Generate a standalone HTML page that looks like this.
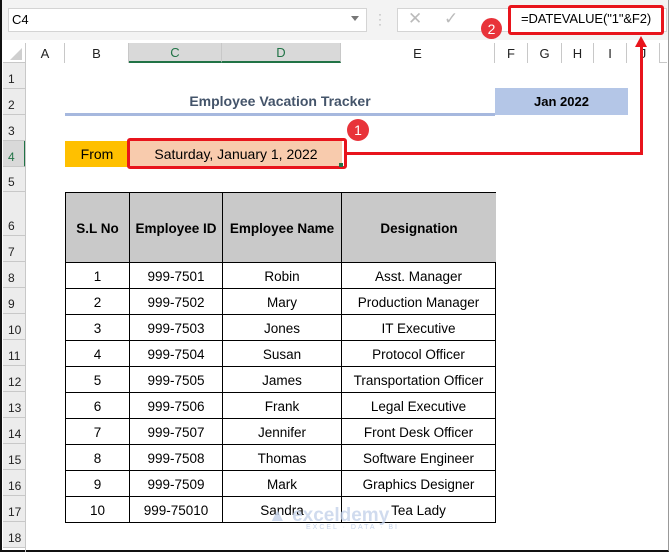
<!DOCTYPE html>
<html><head><meta charset="utf-8"><style>
*{margin:0;padding:0;box-sizing:border-box}
body{width:669px;height:552px;background:#fff;position:relative;overflow:hidden;font-family:"Liberation Sans",sans-serif;font-size:13px;color:#000}
.a{position:absolute}
.c{position:absolute;display:flex;align-items:center;justify-content:center;white-space:nowrap}
.rh{position:absolute;left:3px;width:23px;background:#ececec;border-bottom:1px solid #c8c8c8;font-size:12px;padding-left:5px;display:flex;align-items:flex-end;padding-bottom:2px;color:#222}
.ch{position:absolute;top:43px;height:20px;border-right:1px solid #c8c8c8;display:flex;align-items:center;justify-content:center;font-size:13px;color:#222;background:#fff}
.t{position:absolute;border:1px solid #000;display:flex;align-items:center;justify-content:center;white-space:nowrap;font-size:13.5px;padding-top:2px}
</style></head><body>
<div class="a" style="left:0;top:0;width:669px;height:552px;border:2px solid #111;border-top:0;border-right:1px solid #999"></div>
<div class="a" style="left:2px;top:0;width:666px;height:40px;background:#f3f3f3"></div>
<div class="a" style="left:8px;top:8px;width:359px;height:24px;background:#fff;border:1px solid #d4d4d4"></div>
<div class="a" style="left:12px;top:12px;font-size:13px">C4</div>
<div class="a" style="left:351px;top:16px;width:0;height:0;border-left:4px solid transparent;border-right:4px solid transparent;border-top:5px solid #777"></div>
<div class="a" style="left:378px;top:12px;color:#aaa;font-size:12px;line-height:5px">·<br>·<br>·</div>
<div class="a" style="left:397px;top:8px;width:270px;height:24px;background:#fff;border:1px solid #d4d4d4"></div>
<div class="a" style="left:408px;top:9px;color:#bbb;font-size:17px">✕</div>
<div class="a" style="left:444px;top:9px;color:#bbb;font-size:17px">✓</div>
<div class="a" style="left:508px;top:5px;width:156px;height:30px;border:3px solid #e8141c;border-radius:3px;background:#fff"></div>
<div class="a" style="left:521px;top:11px;font-size:13px;letter-spacing:-0.1px">=DATEVALUE("1"&amp;F2)</div>
<div class="c" style="left:481px;top:18px;width:21px;height:21px;border-radius:50%;background:#e8333a;color:#fff;font-size:14px">2</div>
<div class="a" style="left:3px;top:43px;width:664px;height:20px;background:#fff;border-bottom:1px solid #c8c8c8"></div>
<div class="a" style="left:3px;top:43px;width:23px;height:20px;border-right:1px solid #c8c8c8"></div>
<div class="a" style="left:10px;top:48px;width:0;height:0;border-left:12px solid transparent;border-bottom:12px solid #cfcfcf"></div>
<div class="ch" style="left:26px;width:39px">A</div>
<div class="ch" style="left:65px;width:64px">B</div>
<div class="ch" style="left:129px;width:93px;background:#d9d9d9;border-bottom:2px solid #217346;color:#217346">C</div>
<div class="ch" style="left:222px;width:119px;background:#d9d9d9;border-bottom:2px solid #217346;color:#217346">D</div>
<div class="ch" style="left:341px;width:154px">E</div>
<div class="ch" style="left:495px;width:33px">F</div>
<div class="ch" style="left:528px;width:34px">G</div>
<div class="ch" style="left:562px;width:32px">H</div>
<div class="ch" style="left:594px;width:33px">I</div>
<div class="ch" style="left:627px;width:33px">J</div>
<div class="rh" style="top:63px;height:26px">1</div>
<div class="rh" style="top:89px;height:26px">2</div>
<div class="rh" style="top:115px;height:26px">3</div>
<div class="rh" style="top:141px;height:26px;background:#d9d9d9;border-right:2px solid #217346;color:#217346">4</div>
<div class="rh" style="top:167px;height:25px">5</div>
<div class="rh" style="top:192px;height:44px">6</div>
<div class="rh" style="top:236px;height:26px">7</div>
<div class="rh" style="top:262px;height:26px">8</div>
<div class="rh" style="top:288px;height:26px">9</div>
<div class="rh" style="top:314px;height:26px">10</div>
<div class="rh" style="top:340px;height:26px">11</div>
<div class="rh" style="top:366px;height:26px">12</div>
<div class="rh" style="top:392px;height:26px">13</div>
<div class="rh" style="top:418px;height:26px">14</div>
<div class="rh" style="top:444px;height:26px">15</div>
<div class="rh" style="top:470px;height:26px">16</div>
<div class="rh" style="top:496px;height:26px">17</div>
<div class="rh" style="top:522px;height:26px">18</div>
<div class="a" style="left:25px;top:63px;width:1px;height:489px;background:#c8c8c8"></div>
<div class="c" style="left:65px;top:89px;width:430px;height:24px;font-weight:bold;font-size:14px;color:#44546a">Employee Vacation Tracker</div>
<div class="a" style="left:65px;top:113px;width:430px;height:3px;background:#a6b8de"></div>
<div class="c" style="left:495px;top:88px;width:133px;height:27px;background:#b4c6e7;font-weight:bold">Jan 2022</div>
<div class="c" style="left:65px;top:141px;width:64px;height:26px;background:#ffc000;font-size:14px">From</div>
<div class="c" style="left:130px;top:141px;width:212px;height:26px;background:#f8cbad;font-size:14px">Saturday, January 1, 2022</div>
<div class="a" style="left:127px;top:138px;width:220px;height:31px;border:3px solid #e8141c;border-radius:3px"></div>
<div class="a" style="left:339px;top:163px;width:4px;height:4px;background:#217346"></div>
<div class="c" style="left:347px;top:119px;width:22px;height:22px;border-radius:50%;background:#e8333a;color:#fff;font-size:14px">1</div>
<div class="a" style="left:346px;top:152px;width:297px;height:3px;background:#e8141c"></div>
<div class="a" style="left:640px;top:44px;width:3px;height:111px;background:#e8141c"></div>
<div class="a" style="left:635px;top:36px;width:0;height:0;border-left:6.5px solid transparent;border-right:6.5px solid transparent;border-bottom:11px solid #e8141c"></div>
<div class="a" style="left:65px;top:192px;width:431px;height:71px;background:#c9c9c9"></div>
<div class="t" style="left:65px;top:192px;width:65px;height:71px;font-weight:bold">S.L No</div>
<div class="t" style="left:129px;top:192px;width:94px;height:71px;font-weight:bold">Employee ID</div>
<div class="t" style="left:222px;top:192px;width:120px;height:71px;font-weight:bold">Employee Name</div>
<div class="t" style="left:341px;top:192px;width:155px;height:71px;font-weight:bold;border-right:0">Designation</div>
<div id="rows"></div>
<script>
var d=[["1","999-7501","Robin","Asst. Manager"],["2","999-7502","Mary","Production Manager"],["3","999-7503","Jones","IT Executive"],["4","999-7504","Susan","Protocol Officer"],["5","999-7505","James","Transportation Officer"],["6","999-7506","Frank","Legal Executive"],["7","999-7507","Jennifer","Front Desk Officer"],["8","999-7508","Thomas","Software Engineer"],["9","999-7509","Mark","Graphics Designer"],["10","999-75010","Sandra","Tea Lady"]];
var L=[65,129,222,341],W=[65,94,120,155],h="";
d.forEach(function(r,i){var y=262+i*26;r.forEach(function(v,j){h+='<div class="t" style="left:'+L[j]+'px;top:'+y+'px;width:'+W[j]+'px;height:27px">'+v+'</div>';});});
document.getElementById("rows").innerHTML=h;
</script>
<div class="a" style="left:268px;top:505px;font-size:19px;font-weight:bold;color:#c5d3ea;opacity:.8">▲ exceldemy</div>
<div class="a" style="left:306px;top:524px;font-size:7px;color:#c5d3ea;letter-spacing:2px">EXCEL · DATA · BI</div>
</body></html>
